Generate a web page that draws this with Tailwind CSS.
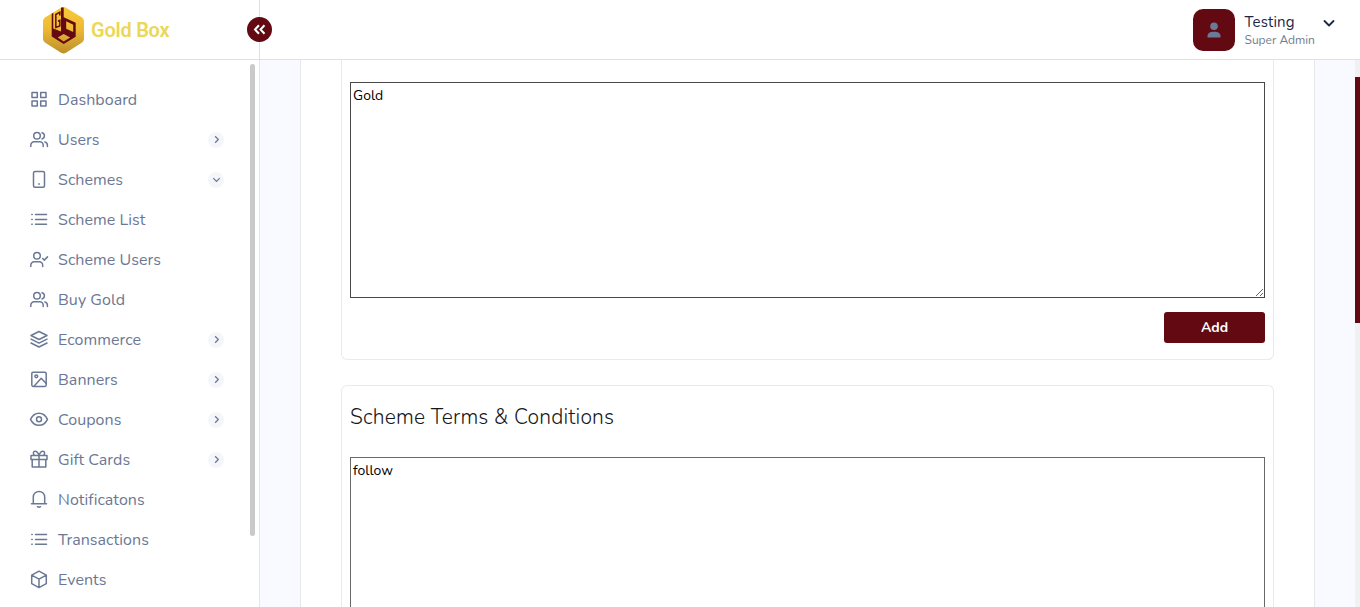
<!DOCTYPE html>
<html lang="en">
<head>
<meta charset="utf-8">
<title>Gold Box</title>
<script src="https://cdn.jsdelivr.net/npm/@tailwindcss/browser@4"></script>
</head>
<body class="h-[607px] overflow-hidden bg-white font-['Nunito','Lato',sans-serif] text-[#212529]">
<div class="flex h-[607px] flex-col overflow-hidden">
  <header class="flex h-[60px] shrink-0 border-b border-[#dee0e4]">
    <div class="relative flex w-[260px] items-center border-r border-[#dee0e4] pl-[42px]">
      <svg class="h-[48px] w-[43px] shrink-0" viewBox="0 0 43 48">
        <defs><linearGradient id="gold" x1="0" y1="0" x2="0" y2="1"><stop offset="0" stop-color="#f8c83a"/><stop offset=".45" stop-color="#efbb35"/><stop offset="1" stop-color="#bd8f2c"/></linearGradient></defs>
        <path d="M19 1.800q2.500-1.500 5 0l15.700 9.500q2.300 1.400 2.300 3.700v18q0 2.300-2.300 3.700L24 46.800q-2.500 1.500-5 0L3.300 36.700Q1 35.300 1 33V15q0-2.300 2.300-3.700Z" fill="url(#gold)"/>
        <path fill-rule="evenodd" fill="#650a12" d="M9.700 7.800l1.600-1v15.700l7.700 3V1.500h2.700v9.700l12 5.500v14L21.700 38l-12-7.500ZM24.200 15.200v7.500l7 3.300v-7.300ZM21.700 28l-6 3.500 6 4 6.500-4Z"/>
        <path d="M17.800 9.500V6.200l-4 2.300v13l4-1.500v-5.500l-1.800.8" fill="none" stroke="#650a12" stroke-width="1.500"/>
      </svg>
      <span class="ml-[6px] whitespace-nowrap font-['Roboto'] text-[20px] font-semibold tracking-[-0.25px] text-[#ebd854]">Gold Box</span>
      <div class="absolute left-[247px] top-[17px] z-10 flex size-[25px] items-center justify-center rounded-full bg-[#620912]">
        <svg class="size-[13px]" viewBox="0 0 13 13" fill="none" stroke="#fff" stroke-width="2"><path d="M6 2.200L2 6.500l4 4.300M11.500 2.200l-4 4.300 4 4.300"/></svg>
      </div>
    </div>
    <div class="flex flex-1 items-center justify-end pr-[24px]">
      <div class="flex size-[42px] items-center justify-center rounded-[10px] bg-[#620912]">
        <svg class="size-[16px]" viewBox="0 0 16 16" fill="#6b7a99"><circle cx="8" cy="4.300" r="3.800"/><path d="M1.500 15.500v-1.200C1.500 11 4 9.800 8 9.800s6.500 1.200 6.500 4.500v1.200Z"/></svg>
      </div>
      <div class="ml-[9px] w-[78px] pl-[0.500px]">
        <div class="h-[20px] whitespace-nowrap text-[15px] leading-[20px] tracking-[0.150px] text-[#1c2749]">Testing</div>
        <div class="h-[16px] whitespace-nowrap text-[12px] leading-[16px] text-[#6f7d92]">Super Admin</div>
      </div>
      <svg class="mb-[14px] h-[10px] w-[14px]" viewBox="0 0 14 10" fill="none" stroke="#1c2749" stroke-width="1.800" stroke-linecap="round" stroke-linejoin="round"><path d="M2.500 3L7 7.500 11.500 3"/></svg>
    </div>
  </header>

  <div class="flex min-h-0 flex-1">
    <aside class="flex w-[260px] shrink-0 justify-between border-r border-[#e4e6ea] pr-[4px]">
      <nav id="menu" class="flex w-[224px] flex-col pt-[20px] text-[16px] tracking-[0.050px] text-[#6b7895]"></nav>
      <div class="mt-[4px] h-[472px] w-[5px] rounded-full bg-[#cacaca]"></div>
    </aside>
    <main class="flex flex-1 justify-between overflow-hidden bg-[#f9faff] pl-[40px]">
      <section class="flex w-[1015px] flex-col border-x border-[#e6e8ec] bg-white px-[40px]">
        <div class="flex h-[300px] w-[933px] shrink-0 flex-col items-end rounded-b-[6px] border border-t-0 border-[#e9eaec] px-[8px] pt-[22px]">
          <textarea class="block h-[216px] w-[915px] shrink-0 resize border border-[#484848] bg-white px-[2px] pt-[3px] text-[14px] leading-[20px] text-black">Gold</textarea>
          <button class="mt-[14px] h-[31px] w-[101px] rounded-[3px] bg-[#620912] text-[14px] font-bold text-white">Add</button>
        </div>
        <div class="mt-[25px] flex h-[222px] w-[933px] shrink-0 flex-col rounded-t-[6px] border border-b-0 border-[#e9eaec] px-[8px]">
          <h2 class="mt-[15px] h-[32px] whitespace-nowrap text-[21px] font-light leading-[32px] tracking-[0.190px] text-[#15181b]">Scheme Terms &amp; Conditions</h2>
          <textarea class="mt-[24px] block h-[150px] w-[915px] shrink-0 resize-none border border-b-0 border-[#686868] bg-white px-[2px] pt-[3px] text-[14px] leading-[20px] text-black">follow</textarea>
        </div>
      </section>
      <div class="w-[5px] bg-[#f1f1f1] pt-[17px]"><div class="h-[246px] bg-[#620912]"></div></div>
    </main>
  </div>
</div>
<script>
const people = '<circle cx="8" cy="6.800" r="3.300"/><path d="M1.800 17.500v-1.300a3.400 3.400 0 0 1 3.400-3.400h5.600a3.400 3.400 0 0 1 3.400 3.400v1.300M13 3.700a3.200 3.200 0 0 1 0 6.200M15.800 13a3.300 3.300 0 0 1 2.600 3.200v1.300"/>';
const list = '<path d="M6.500 5.500h11M6.500 10.500h11M6.500 15.200h11M2.800 5.500h.4M2.800 10.500h.4M2.800 15.200h.4"/>';
const items = [
  ['Dashboard', '', '<path d="M3 3.500h5.300v5H3ZM11.700 3.500H17v5h-5.300ZM3 12h5.300v5H3ZM11.700 12H17v5h-5.300Z"/>'],
  ['Users', 'r', people],
  ['Schemes', 'd', '<rect x="4.500" y="2.600" width="11" height="15.700" rx="1.500"/><path d="M9.700 15h.6"/>'],
  ['Scheme List', '', list],
  ['Scheme Users', '', '<circle cx="8" cy="6.800" r="3.300"/><path d="M1.800 17.500v-1.300a3.400 3.400 0 0 1 3.400-3.400h5.100a3.400 3.400 0 0 1 3.400 3.400v1.300M13.700 9.500l1.600 1.600 3.200-3.200"/>'],
  ['Buy Gold', '', people],
  ['Ecommerce', 'r', '<path d="M10 2.500l8 4-8 4-8-4ZM2 10.200l8 4 8-4M2 14l8 4 8-4"/>'],
  ['Banners', 'r', '<rect x="2.800" y="3.200" width="14.400" height="14.200" rx="1.300"/><circle cx="7.300" cy="7.300" r="1.400"/><path d="M5 17.200l7.200-8 5 5.300"/>'],
  ['Coupons', 'r', '<path d="M1.500 10.300C3.500 6.300 6.500 4.300 10 4.300s6.500 2 8.500 6c-2 4-5 6-8.500 6s-6.500-2-8.500-6Z"/><circle cx="10" cy="10.300" r="2.500"/>'],
  ['Gift Cards', 'r', '<path d="M2 6.500h16v4H2ZM3.200 10.500v7.400h13.600v-7.400M10 6.500v11.400M10 6.500C9 3.500 7.700 2.300 6.200 2.300 4 2.300 3.800 5.200 5.500 6.200M10 6.500c1-3 2.300-4.200 3.800-4.200 2.200 0 2.400 2.900.7 3.900"/>'],
  ['Notificatons', '', '<path d="M2.500 14.700h15M4.300 14.700V8.100a5.700 5.700 0 0 1 11.400 0v6.600M8.500 17.700q1.500 1 3 0"/>'],
  ['Transactions', '', list],
  ['Events', '', '<path d="M10 2.200l7.300 4v8.400l-7.300 4-7.300-4V6.200ZM2.700 6.200L10 10.200l7.300-4M10 10.200v8.400"/>'],
];
const arrows = { r: 'M4.500 2.500L8 6l-3.500 3.500', d: 'M2.500 4.500L6 8l3.500-3.500' };
document.getElementById('menu').innerHTML = items.map(([name, arrow, icon]) => `
  <a class="flex h-[40px] shrink-0 items-center pl-[29px]">
    <svg class="mb-[2px] size-[20px] shrink-0" viewBox="0 0 20 20" fill="none" stroke="currentColor" stroke-width="1.500" stroke-linecap="round" stroke-linejoin="round">${icon}</svg>
    <span class="ml-[9px] whitespace-nowrap">${name}</span>
    ${arrow ? `<span class="ml-auto flex size-[16px] items-center justify-center rounded-full bg-[#f4f6f9]"><svg class="mb-[1px] size-[11px]" viewBox="0 0 12 12" fill="none" stroke="currentColor" stroke-width="1.400"><path d="${arrows[arrow]}"/></svg></span>` : ''}
  </a>`).join('');
</script>
</body>
</html>
